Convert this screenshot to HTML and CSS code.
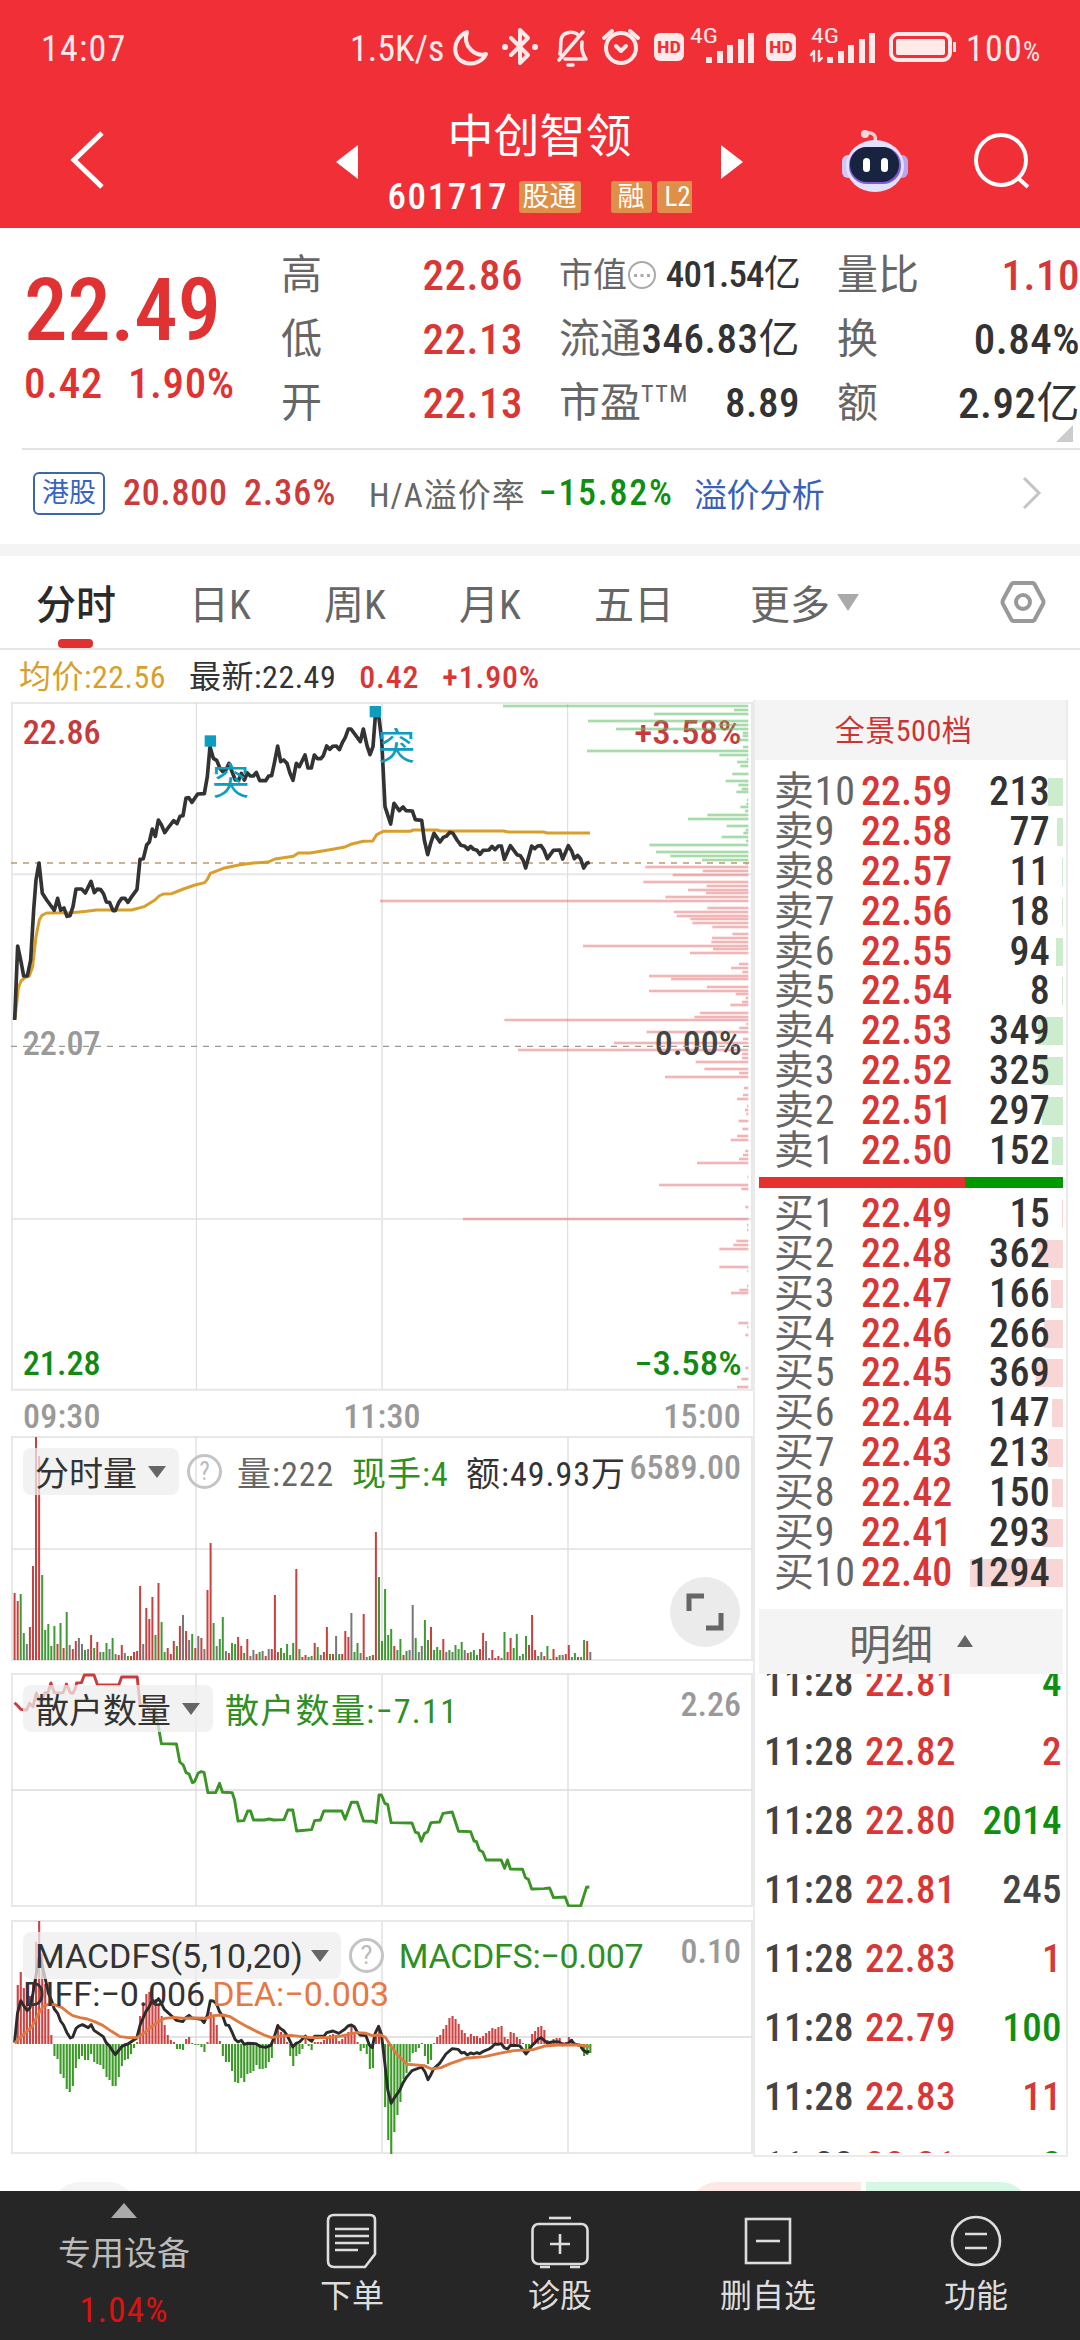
FILE: index.html
```
<!DOCTYPE html>
<html lang="zh">
  <head>
    <meta charset="UTF-8" />
    <meta name="viewport" content="width=device-width, initial-scale=1.0" />
    <title>中创智领 601717</title>
    <link rel="stylesheet" href="styles.css">
  </head>
  <body>
    <header class="top">
      <div class="status">
        <span class="clock">14:07</span>
        <span class="speed">1.5K/s</span>
        <svg class="status-icons" viewBox="450 20 510 60" width="510" height="60" fill="none" stroke="#ffe9e9" stroke-width="4" stroke-linecap="round" stroke-linejoin="round">
          <path d="M467 33C452 39 451 60 466 64C474 66 483 62 486 55C476 58 462 48 467 33Z"/>
          <path d="M511 39L528 56L520 64V31L528 39L511 56"/>
          <path d="M505 48h.1M535 48h.1" stroke-width="6"/>
          <path d="M559 61L583 33M560 55C562 47 558 36 567 34C572 32 577 34 579 37M582 43C581 51 583 56 586 60H565M568 66h5" stroke-width="3.6"/>
          <circle cx="621" cy="49" r="15"/><path d="M604 39L612 32M638 39L630 32M616 47L621 52L626 47"/>
          <g stroke="none" fill="#ffe9e9">
            <rect x="654" y="34" width="30" height="28" rx="6"/>
            <rect x="766" y="34" width="30" height="28" rx="6"/>
            <path d="M706 58h6v6h-6zM717 52h6v12h-6zM727 46h6v18h-6zM738 40h6v24h-6zM748 34h6v30h-6zM827 58h6v6h-6zM838 52h6v12h-6zM848 46h6v18h-6zM859 40h6v24h-6zM869 34h6v30h-6zM953 43h3v10h-3z"/>
            <rect x="896" y="40" width="49" height="16" rx="2"/>
            <text class="ic-g" x="690" y="44" textLength="28" lengthAdjust="spacingAndGlyphs">4G</text>
            <text class="ic-g" x="811" y="44" textLength="28" lengthAdjust="spacingAndGlyphs">4G</text>
          </g>
          <g stroke="none" fill="#ee3038">
            <text class="ic-hd" x="657" y="54" textLength="24" lengthAdjust="spacingAndGlyphs">HD</text>
            <text class="ic-hd" x="769" y="54" textLength="24" lengthAdjust="spacingAndGlyphs">HD</text>
          </g>
          <path d="M814 62V52L811 56M819 52V62L822 59" stroke-width="2.4"/>
          <rect x="891" y="35" width="59" height="26" rx="7"/>
        </svg>
        <span class="battery">100<small>%</small></span>
      </div>
      <div class="title-bar">
        <svg class="back" viewBox="0 0 36 60" width="36" height="60"><path d="M32 3L4 30L32 57" fill="none" stroke="#fff" stroke-width="5"/></svg>
        <svg class="prev" viewBox="0 0 22 34" width="22" height="34"><path d="M22 0V34L0 17Z" fill="#fff"/></svg>
        <div class="stock">
          <h1>中创智领</h1>
          <div class="code"><span>601717</span><b>股通</b><b class="rong">融</b><b class="l2">L2</b></div>
        </div>
        <svg class="next" viewBox="0 0 22 34" width="22" height="34"><path d="M0 0V34L22 17Z" fill="#fff"/></svg>
        <svg class="robot" viewBox="0 0 68 64" width="68" height="64">
          <path d="M34 13C36 5 30 3 25 4" fill="none" stroke="#ffc9cf" stroke-width="3.5"/>
          <circle cx="24" cy="5" r="4" fill="#ffd5d8"/>
          <rect x="1" y="26" width="12" height="23" rx="6" fill="#cfc8f8"/>
          <rect x="55" y="26" width="12" height="23" rx="6" fill="#b9a6ee"/>
          <ellipse cx="34" cy="37" rx="29" ry="26" fill="#e4e1fd"/>
          <rect x="8" y="18" width="52" height="37" rx="18" fill="#7d5be0"/>
          <rect x="9" y="18" width="49" height="35" rx="17" fill="#17233f"/>
          <rect x="22" y="29" width="7" height="14" rx="3.5" fill="#fff"/>
          <rect x="40" y="29" width="7" height="14" rx="3.5" fill="#fff"/>
        </svg>
        <svg class="search" viewBox="0 0 60 60" width="60" height="60" fill="none" stroke="#fff" stroke-width="4"><circle cx="29" cy="29" r="25"/><path d="M46 47L56 56"/></svg>
      </div>
    </header>

    <section class="quote">
      <div class="last">
        <div class="price">22.49</div>
        <div class="change"><span>0.42</span><span>1.90%</span></div>
      </div>
      <dl class="col1">
        <dt>高</dt><dd class="red">22.86</dd>
        <dt>低</dt><dd class="red">22.13</dd>
        <dt>开</dt><dd class="red">22.13</dd>
      </dl>
      <dl class="col2">
        <dt class="cap">市值<svg viewBox="0 0 30 30" width="30" height="30"><circle cx="15" cy="15" r="13" fill="none" stroke="#aaa" stroke-width="2"/><path d="M7 14h3v3H7zM13.500 14h3v3h-3zM20 14h3v3h-3z" fill="#aaa"/></svg></dt><dd class="small">401.54<u>亿</u></dd>
        <dt>流通</dt><dd>346.83<u>亿</u></dd>
        <dt>市盈<sup>TTM</sup></dt><dd>8.89</dd>
      </dl>
      <dl class="col3">
        <dt>量比</dt><dd class="red">1.10</dd>
        <dt>换</dt><dd>0.84%</dd>
        <dt>额</dt><dd>2.92<u>亿</u></dd>
      </dl>
      <i class="corner"></i>
    </section>

    <section class="hk">
      <b class="tag">港股</b>
      <span class="hk-price">20.800</span>
      <span class="hk-pct">2.36%</span>
      <span class="hk-label">H/A溢价率</span>
      <span class="hk-prem">−15.82%</span>
      <a class="hk-link">溢价分析</a>
      <svg viewBox="0 0 22 34" width="22" height="34"><path d="M3 2L18 17L3 32" fill="none" stroke="#c4c4c4" stroke-width="3"/></svg>
    </section>

    <nav class="tabs">
      <a class="on">分时</a><a>日K</a><a>周K</a><a>月K</a><a>五日</a><a>更多<i></i></a>
      <svg viewBox="0 0 46 44" width="46" height="44" fill="none" stroke="#999" stroke-width="4"><path d="M13 3H33Q34 3 35 5L43 20Q44 22 43 24L35 39Q34 41 33 41H13Q12 41 11 39L3 24Q2 22 3 20L11 5Q12 3 13 3Z"/><circle cx="23" cy="22" r="7"/></svg>
    </nav>

    <main class="main">
      <div class="charts">
        <div class="legend"><span class="avg">均价:22.56</span><span>最新:22.49</span><span class="red">0.42</span><span class="red">+1.90%</span></div>

        <!-- price panel, drawn at three units per pixel -->
        <svg class="price-chart" viewBox="0 30 2259 2085" width="753" height="695">
          <g fill="none" stroke="#e8e8e8" stroke-width="6">
            <path d="M36 39H2256V2099H36ZM1146 39V2099M36 553H2256M36 1587H2256"/>
            <path d="M589 39V2099M1703 39V2099" stroke="#d9d9d9" stroke-width="3"/>
          </g>
          <g class="chart-text">
            <text x="68" y="162" textLength="234" lengthAdjust="spacingAndGlyphs" class="t-red">22.86</text>
            <text x="1903" y="162" textLength="322" lengthAdjust="spacingAndGlyphs" class="t-red">+3.58%</text>
            <text x="68" y="1096" textLength="234" lengthAdjust="spacingAndGlyphs" class="t-gray">22.07</text>
            <text x="68" y="2055" textLength="234" lengthAdjust="spacingAndGlyphs" class="t-green">21.28</text>
            <text x="1903" y="2055" textLength="322" lengthAdjust="spacingAndGlyphs" class="t-green">−3.58%</text>
          </g>
          <g id="depth"></g>
          <text class="chart-text t-dark" x="1964" y="1096" textLength="261" lengthAdjust="spacingAndGlyphs">0.00%</text>
          <g fill="none" stroke-width="4" stroke-dasharray="18 18">
            <path d="M33 519H2247" stroke="#b99b6b"/><path d="M33 1069H2247" stroke="#999"/>
          </g>
          <g fill="none" stroke-linejoin="round">
            <polyline stroke="#d99f2b" stroke-width="9" points="45,985 55,895 63,873 75,863 88,858 98,830 108,740 118,690 126,676 140,669 215,668 260,664 290,660 395,660 432,650 465,630 477,618 490,612 515,611 550,597 585,585 614,578 622,568 631,550 670,535 720,524 760,519 805,516 825,507 880,499 895,489 930,489 985,480 1035,471 1052,463 1090,454 1118,453 1130,434 1150,424 1230,424 1240,420 1310,420 1322,423 1510,423 1525,426 1630,426 1642,429 1770,429"/>
            <polyline stroke="#333" stroke-width="11" points="44,990 53,768 63,815 71,858 82,858 92,810 101,660 108,570 117,519 127,610 140,630 163,661 173,625 182,661 192,654 201,679 210,677 219,650 228,597 245,597 256,609 273,574 283,608 292,597 302,599 311,612 319,636 329,638 339,662 346,662 356,638 365,625 375,625 384,637 393,623 411,598 420,508 430,506 440,465 448,456 457,417 466,439 475,390 484,404 494,428 504,414 521,392 531,401 540,379 549,377 558,324 566,323 576,337 593,312 613,311 622,260 630,170 640,205 650,211 660,235 668,245 678,239 687,220 696,245 706,270 716,270 724,250 733,270 742,249 751,258 760,258 769,247 779,272 797,272 806,258 815,257 824,215 833,168 842,215 851,210 861,220 870,250 879,271 889,220 898,230 915,195 924,234 934,234 943,195 952,206 962,206 970,197 980,168 989,178 998,169 1009,168 1018,179 1027,158 1036,142 1045,117 1053,117 1081,155 1090,117 1101,167 1110,194 1119,170 1127,66 1137,85 1145,150 1155,350 1172,402 1182,340 1198,362 1209,351 1218,362 1237,363 1246,389 1265,391 1273,450 1283,494 1292,460 1302,430 1320,456 1330,442 1340,438 1349,427 1359,430 1371,450 1383,466 1395,469 1404,478 1412,469 1421,478 1431,481 1440,493 1449,481 1467,480 1476,469 1485,479 1495,468 1504,468 1513,508 1531,467 1551,494 1561,497 1569,510 1577,534 1595,468 1604,476 1613,468 1623,467 1632,480 1642,506 1660,481 1679,480 1688,507 1705,467 1715,483 1723,506 1733,496 1742,507 1751,534 1760,520 1769,517"/>
          </g>
          <g fill="#0c9dbf">
            <rect x="614" y="136" width="34" height="34"/><rect x="1109" y="48" width="34" height="34"/>
            <text class="mark" x="636" y="315">突</text><text class="mark" x="1133" y="210">突</text>
          </g>
        </svg>
        <div class="times"><span>09:30</span><span>11:30</span><span>15:00</span></div>

        <div class="panel">
          <svg viewBox="0 0 753 226" width="753" height="226">
            <g class="grid"><path d="M12 1H752V224H12ZM382 1V224M12 113H752"/><path class="thin" d="M196 1V224M568 1V224"/></g>
            <g id="volume"></g>
          </svg>
          <div class="bar-row">
            <span class="chip">分时量<i></i></span><span class="help">?</span>
            <span class="v1">量:222</span><span class="v2">现手:4</span><span class="v3">额:49.93万</span><span class="max">6589.00</span>
          </div>
          <div class="expand"><svg viewBox="0 0 38 38" width="38" height="38" fill="none" stroke="#666" stroke-width="5"><path d="M3 18V3H18M35 20V35H20"/></svg></div>
        </div>

        <div class="panel retail">
          <svg viewBox="0 0 753 234" width="753" height="234">
            <g class="grid"><path d="M12 1H752V233H12ZM382 1V233"/><path class="thin" d="M196 1V233M568 1V233M12 117H752"/></g>
            <g transform="translate(0 -13) scale(.4847 .3333)" class="line">
              <polyline stroke="#c83c3c" points="30,128 37,138 43,148 55,150 61,130 68,140 75,99 84,128 93,98 99,98 105,69 112,98 124,99 130,98 137,72 145,98 150,100 155,88 158,69 168,68 174,45 194,45 201,74 245,75 251,51 283,51 289,135 304,138 311,160"/>
              <polyline stroke="#3a9426" points="311,160 320,145 325,185 333,251 364,252 371,306 378,315 384,338 390,342 397,368 401,366 409,339 415,335 421,337 429,398 445,398 453,370 459,397 479,398 484,420 491,483 503,482 511,453 517,453 523,480 545,480 555,477 565,480 586,479 594,450 604,450 612,513 643,509 649,482 661,480 668,453 705,453 712,478 725,427 737,427 750,483 770,484 776,488 782,405 787,405 794,430 800,434 807,488 850,489 857,517 863,519 869,544 876,520 882,516 889,488 907,486 914,460 933,456 946,514 971,515 978,543 983,545 989,570 996,576 1003,600 1034,600 1041,625 1047,600 1053,627 1078,628 1084,653 1090,658 1097,687 1122,686 1134,684 1142,713 1166,711 1173,738 1198,738 1210,682 1216,681"/>
            </g>
          </svg>
          <div class="bar-row">
            <span class="chip">散户数量<i></i></span><span class="v-retail">散户数量:−7.11</span><span class="max">2.26</span>
          </div>
        </div>

        <div class="panel macd">
          <svg viewBox="0 0 753 234" width="753" height="234">
            <g class="grid"><path d="M12 1H752V233H12ZM382 1V233"/><path class="thin" d="M196 1V233M568 1V233M12 117H752"/></g>
            <g id="macd"></g>
            <g transform="translate(0 -10) scale(.4847 .3333)" class="line">
              <polyline stroke="#2b2b2b" points="30,398 36,310 43,272 50,290 56,302 62,293 68,250 75,190 81,140 87,165 94,210 100,250 106,270 112,297 119,310 125,333 131,345 138,368 145,384 150,381 157,355 163,348 170,344 182,353 188,344 194,361 207,374 213,380 219,398 226,408 232,422 238,434 244,423 251,410 257,405 264,402 276,390 282,385 289,345 295,325 301,305 308,290 314,270 320,278 327,266 333,280 339,298 346,307 352,315 364,331 377,335 384,322 390,316 396,324 415,328 421,338 428,315 434,272 440,273 447,282 453,305 460,320 466,345 472,346 478,364 485,388 491,396 498,391 504,403 510,400 528,401 536,409 548,412 559,406 566,380 573,347 579,356 586,363 592,375 598,393 604,411 611,400 618,396 630,378 637,388 643,394 649,379 668,379 674,368 687,363 699,370 712,357 718,348 725,345 731,350 737,366 743,375 755,377 762,405 768,413 774,370 781,349 787,373 794,460 800,540 807,580 813,565 825,540 831,520 838,503 850,482 870,471 877,486 883,509 889,494 895,476 907,460 920,432 933,416 945,418 952,429 958,427 964,435 971,429 977,432 984,428 989,431 996,425 1009,417 1015,411 1021,402 1028,403 1034,401 1041,414 1047,417 1053,406 1072,407 1078,418 1085,432 1091,422 1097,407 1104,398 1110,388 1116,383 1129,399 1142,395 1154,396 1161,405 1172,400 1179,391 1185,402 1197,406 1203,420 1210,427 1216,424"/>
              <polyline stroke="#e0793f" points="30,400 42,382 55,365 66,350 78,315 88,292 100,283 115,285 128,293 140,307 150,317 165,323 180,327 195,335 212,346 230,364 248,380 265,383 282,383 295,372 310,353 325,337 340,325 360,322 380,325 400,324 425,325 440,317 460,315 475,320 490,334 510,350 530,365 545,375 560,383 575,379 600,376 640,383 680,383 705,378 735,368 755,370 768,377 785,375 795,382 805,405 820,435 840,463 875,467 890,477 910,473 930,460 960,445 1000,440 1030,430 1060,422 1100,419 1125,408 1150,405 1195,405 1216,410"/>
            </g>
          </svg>
          <div class="bar-row wide">
            <span class="chip">MACDFS(5,10,20)<i></i></span><span class="help">?</span><span class="v-macd">MACDFS:−0.007</span><span class="max">0.10</span>
          </div>
          <div class="sub-row wide"><span>DIFF:−0.006</span><span class="dea">DEA:−0.003</span></div>
        </div>
      </div>

      <aside class="book">
        <div class="book-head">全景500档</div>
        <div class="levels" id="asks"></div>
        <div class="ratio"><i></i></div>
        <div class="levels" id="bids"></div>
        <div class="detail-head">明细<i></i></div>
        <div class="ticks" id="ticks"></div>
      </aside>
    </main>

    <div class="peek"><i class="p1"></i><i class="p2"></i><i class="p3"></i></div>

    <footer class="bottom">
      <div class="device"><i></i><span>专用设备</span><em>1.04%</em></div>
      <div><svg viewBox="0 0 60 56" width="60" height="56"><path d="M12 2H48Q53 2 53 7V41L43 54H12Q6 54 6 48V8Q6 2 12 2Z"/><path d="M13 16H47M13 23H47M13 30H47M13 37H36"/></svg><span>下单</span></div>
      <div><svg viewBox="0 0 60 56" width="60" height="56"><path d="M19 5H41" /><rect x="2.500" y="11" width="55" height="40" rx="6"/><path d="M30 21V41M20 31H40M10 54H20M40 54H50"/></svg><span>诊股</span></div>
      <div><svg viewBox="0 0 60 56" width="60" height="56"><rect x="8" y="6" width="44" height="44"/><path d="M18 28H42"/></svg><span>删自选</span></div>
      <div><svg viewBox="0 0 60 56" width="60" height="56"><circle cx="30" cy="28" r="24"/><path d="M19 21H41M19 35H41"/></svg><span>功能</span></div>
    </footer>

    <script>
      const RED = "#c9403f", GREEN = "#3f9a35", GRAY = "#777";

      function rect(x, y, w, h, fill) {
        return `<rect x="${x.toFixed(1)}" y="${y}" width="${w}" height="${h}" fill="${fill}"/>`;
      }

      // y:length pairs, measured from the right edge
      const depthSell = "48:736 60:43 72:283 93:481 105:90 117:397 129:17 138:17 150:30 171:16 183:484 195:87 207:5 216:34 228:24 252:48 273:68 285:30 297:20 306:36 330:4 342:6 351:24 363:10 375:123 387:181 408:65 420:8 429:15 441:80 453:7 465:297 486:277 498:234 510:139";
      const depthBuy = "520:10 531:309 543:137 555:227 576:315 588:125 600:181 609:127 621:249 633:1105 654:123 666:223 678:215 687:174 699:168 711:108 732:48 744:109 756:111 768:496 777:106 789:175 822:28 834:52 846:18 858:298 867:232 891:124 903:298 912:38 924:8 936:19 945:54 969:145 981:162 990:732 1002:6 1014:27 1026:305 1047:16 1059:403 1080:691 1092:20 1104:19 1116:158 1137:132 1149:28 1161:250 1194:13 1215:16 1227:34 1248:4 1260:10 1272:6 1293:29 1317:18 1338:34 1350:53 1383:9 1395:16 1407:28 1419:154 1461:3 1485:268 1497:21 1551:9 1587:856 1605:4 1620:4 1653:36 1665:45 1677:87 1731:87 1743:3 1788:4 1800:27 1809:52 1899:30 1911:4 1935:9 2034:9 2067:21 2091:34";
      function depthBars(list, fill) {
        return list.split(" ").map((s) => {
          const [y, w] = s.split(":").map(Number);
          return rect(2245 - w, y - 4, w, 8, fill);
        }).join("");
      }
      document.getElementById("depth").innerHTML =
        depthBars(depthSell, "rgba(96,190,100,.55)") + depthBars(depthBuy, "rgba(226,100,100,.48)");

      // one bar a minute
      const volume = "67r 59r 66g 27g 16k 33r 94r 223r 204r 85g 30g 36g 14g 34g 16r 37g 12r 48g 15k 11r 19r 22k 16k 10g 11k 25r 12g 18r 8k 8g 17g 11k 22g 6k 5r 15r 7k 4g 4r 8r 9r 74r 16k 52r 41r 63r 25g 77r 38g 8g 12r 6r 19r 14g 34r 45k 29r 20k 26g 12r 24k 22r 11k 70r 117r 37g 14k 21g 43g 9k 7r 17g 16g 23r 14r 7g 21r 4k 10k 6r 8g 9k 4r 11k 11r 65r 8r 12g 7g 16g 5g 17g 91r 11g 3r 5r 3g 4g 17r 13g 5k 8r 33r 6g 6r 24k 6g 6r 29r 23r 47k 8g 17g 7k 46r 3k 4g 5r 128r 83g 19g 71g 25g 31g 14r 10g 21g 5r 9g 10k 55k 22g 8k 14k 40g 20g 33r 10g 13g 10g 21r 8k 10g 8k 15g 11g 18g 10k 7r 8g 10g 5g 11r 27r 19k 2k 10r 2r 4r 2k 28g 8r 22r 12g 26g 4k 6g 24g 15r 45r 10r 4g 8k 4r 14g 1r 11r 3r 5g 5k 6r 15r 3g 7g 3r 3g 20g 19r 8k";
      const tone = { r: RED, g: GREEN, k: GRAY };
      document.getElementById("volume").innerHTML = volume.split(" ").map((s, i) => {
        const h = parseInt(s);
        return rect(13.6 + i * 3.062, 224 - h, 2, h, tone[s.slice(-1)]);
      }).join("");

      const macd = [0,59,72,56,40,48,60,102,123,90,60,35,9,-12,-15,-30,-34,-45,-48,-42,-24,-15,-12,-16,-16,-10,-18,-20,-21,-25,-33,-36,-42,-42,-33,-22,-16,-15,-10,-4,2,28,38,50,52,57,45,40,28,19,9,4,2,-5,-5,-6,5,7,1,-1,-1,-3,-8,2,32,28,19,3,-12,-18,-18,-27,-38,-39,-34,-38,-30,-29,-27,-21,-25,-25,-24,-18,-14,10,20,12,10,2,-12,-22,-12,-10,-5,8,-2,-6,2,2,2,4,6,9,10,9,3,5,9,12,19,11,2,-7,-4,-10,-25,-24,8,18,10,-63,-96,-110,-88,-71,-58,-35,-29,-18,-9,-8,-4,1,-12,-20,-16,1,7,9,15,19,26,28,25,20,14,11,7,10,8,8,6,8,11,13,16,15,17,18,7,5,12,11,7,5,1,-8,-5,10,13,17,18,14,4,2,5,6,6,2,2,7,5,1,-2,-5,-12,-11,-9];
      document.getElementById("macd").innerHTML = macd.map((v, i) =>
        rect(13.6 + i * 3.062, v > 0 ? 124 - v : 124, 2.1, Math.abs(v), v > 0 ? "#d04242" : "#3a9a25")
      ).join("");

      function levels(id, side, from, step, price, vols) {
        const fill = side === "卖" ? "sell" : "buy";
        document.getElementById(id).innerHTML = vols.map((v, i) =>
          `<div class="level"><span class="lv">${side}${from + step * i}</span><span class="pr">${(price - i * 0.01).toFixed(2)}</span><span class="vol">${v}</span><i class="${fill}" style="width:${Math.round(v / 13.9)}px"></i></div>`
        ).join("");
      }
      levels("asks", "卖", 10, -1, 22.59, [213, 77, 11, 18, 94, 8, 349, 325, 297, 152]);
      levels("bids", "买", 1, 1, 22.49, [15, 362, 166, 266, 369, 147, 213, 150, 293, 1294]);

      const ticks = [["22.81", 4, "g"], ["22.82", 2, "r"], ["22.80", 2014, "g"], ["22.81", 245, "k"], ["22.83", 1, "r"], ["22.79", 100, "g"], ["22.83", 11, "r"], ["22.81", 8, "g"]];
      document.getElementById("ticks").innerHTML = ticks.map(([p, v, c]) =>
        `<div class="tick"><span>11:28</span><span class="red">${p}</span><span class="${c}">${v}</span></div>`
      ).join("");
    </script>
  </body>
</html>
```
FILE: styles.css
```
* {
  box-sizing: border-box;
}
body {
  margin: 0;
  width: 1080px;
  height: 2340px;
  overflow: hidden;
  background: #fff;
  color: #333;
  font-family: Roboto, "Noto Sans CJK SC", sans-serif;
  font-stretch: 75%;
}
i, em {
  font-style: normal;
}
svg {
  display: block;
  flex: none;
}
.red, .r {
  color: #d93636;
}
.g {
  color: #0f8f12;
}
.k {
  color: #444;
}
.wide {
  font-stretch: 100%;
}

/* header */
.top {
  height: 228px;
  background: #f02f37;
  color: #fff;
}
.status {
  display: flex;
  align-items: center;
  height: 98px;
  padding-left: 41px;
  font-size: 36px;
  color: #ffe9e9;
}
.clock {
  width: 309px;
  letter-spacing: 1.2px;
}
.speed {
  width: 100px;
}
.battery {
  margin-left: 6px;
  letter-spacing: 1.2px;
}
.battery small {
  font-size: 27px;
}
.ic-g {
  font-size: 20px;
}
.ic-hd {
  font-size: 17px;
  font-weight: 700;
}
.title-bar {
  display: flex;
  height: 130px;
  padding-left: 70px;
}
.back {
  margin-top: 32px;
}
.prev, .next {
  margin-top: 47px;
}
.prev {
  margin-left: 230px;
}
.stock {
  width: 363px;
  display: flex;
  flex-direction: column;
  align-items: center;
}
.stock h1 {
  margin: 8px 0 0;
  font-size: 46px;
  font-weight: 400;
  line-height: 60px;
}
.code {
  display: flex;
  align-items: center;
  width: 304px;
  height: 60px;
  padding-top: 1px;
  overflow: hidden;
}
.code span {
  flex: none;
  width: 131px;
  font-size: 37px;
  font-weight: 500;
  letter-spacing: 1.6px;
}
.code b {
  flex: none;
  height: 32px;
  padding: 0 4px;
  border-radius: 3px;
  background: #df9048;
  font-size: 27px;
  font-weight: 400;
  line-height: 32px;
}
.code .rong {
  margin: 0 5px 0 30px;
  padding: 0 7px;
}
.code .l2 {
  padding: 0 8px;
}
.robot {
  margin: 31px 0 0 98px;
}
.search {
  margin: 33px 0 0 63px;
}

/* quote block */
.quote {
  position: relative;
  display: flex;
  height: 222px;
  margin-left: 22px;
  padding-top: 15px;
  border-bottom: 2px solid #e3e3e3;
}
.last {
  width: 259px;
  color: #e03232;
}
.price {
  height: 128px;
  padding: 17px 0 0 2px;
  font-size: 87px;
  font-weight: 500;
  line-height: 100px;
  letter-spacing: -0.3px;
}
.change {
  display: flex;
  gap: 25px;
  padding-left: 2px;
  font-size: 43px;
  font-weight: 500;
  line-height: 24px;
  letter-spacing: 0.6px;
}
.quote dl {
  display: grid;
  grid-template-columns: auto 1fr;
  grid-auto-rows: 64px;
  align-items: center;
  margin: 0;
  font-size: 43px;
}
.quote dt {
  color: #666;
  font-size: 41px;
  line-height: 60px;
  white-space: nowrap;
}
.quote dd {
  margin: 0;
  line-height: 60px;
  text-align: right;
  white-space: nowrap;
  font-weight: 500;
  letter-spacing: 0.5px;
}
.quote u {
  font-weight: 400;
  text-decoration: none;
}
.quote .col1 {
  width: 242px;
}
.quote .col2 {
  width: 241px;
  margin-left: 36px;
  grid-template-columns: 80px 1fr;
}
.quote .col2 dd {
  font-size: 41px;
}
.quote .col2 .small {
  font-size: 37px;
  letter-spacing: -0.8px;
}
.quote .cap {
  display: flex;
  align-items: center;
  font-size: 34px;
}
.quote sup {
  font-size: 24px;
  line-height: 0;
  letter-spacing: 1.5px;
}
.quote .col3 {
  width: 243px;
  margin-left: 37px;
}
.corner {
  position: absolute;
  right: 7px;
  bottom: 6px;
  border-left: 17px solid transparent;
  border-bottom: 17px solid #ccc;
}

/* h-share line */
.hk {
  display: flex;
  align-items: center;
  height: 106px;
  padding: 0 37px 8px 33px;
  border-bottom: 12px solid #f4f4f4;
  white-space: nowrap;
  font-size: 36px;
  letter-spacing: 1.1px;
}
.hk .tag {
  width: 72px;
  height: 43px;
  margin-right: 18px;
  border: 2px solid #3d68a8;
  border-radius: 6px;
  color: #3763c0;
  font-size: 27px;
  font-weight: 400;
  line-height: 38px;
  text-align: center;
  letter-spacing: 0;
}
.hk-price, .hk-pct, .hk-prem {
  font-weight: 500;
}
.hk-price {
  width: 121px;
  letter-spacing: 0.8px;
  color: #cc3a3a;
}
.hk-pct {
  width: 125px;
  color: #cc3a3a;
}
.hk-label {
  width: 170px;
  font-size: 33px;
  letter-spacing: 1px;
  color: #666;
}
.hk-prem {
  width: 155px;
  letter-spacing: 1.7px;
  color: #0f8f12;
}
.hk-link {
  flex: 1;
  font-size: 33px;
  color: #3b5fb8;
  letter-spacing: -0.4px;
}

/* period tabs */
.tabs {
  display: flex;
  align-items: center;
  height: 94px;
  padding-left: 36px;
  border-bottom: 2px solid #e6e6e6;
  color: #666;
  font-size: 40px;
}
.tabs a {
  position: relative;
  flex: none;
  width: 135px;
}
.tabs a:first-child {
  width: 153px;
}
.tabs a:nth-child(5) {
  width: 156px;
}
.tabs a:nth-child(6) {
  display: flex;
  align-items: center;
  gap: 7px;
  width: 250px;
}
.tabs a i {
  border: 11px solid transparent;
  border-top: 17px solid #aaa;
  border-bottom: 0;
}
.tabs .on {
  color: #2a2a2a;
  font-weight: 500;
}
.tabs .on::after {
  content: "";
  position: absolute;
  left: 22px;
  bottom: -17px;
  width: 35px;
  height: 9px;
  border-radius: 4px;
  background: #e03030;
}

.main {
  display: flex;
  height: 1508px;
}
.charts {
  width: 753px;
}
.legend {
  display: flex;
  height: 50px;
  padding-left: 19px;
  font-size: 32px;
  line-height: 54px;
  letter-spacing: 0.5px;
}
.legend span {
  margin-right: 23px;
}
.legend .avg {
  color: #d99f2b;
}
.legend .red {
  font-weight: 500;
  letter-spacing: 0.8px;
}
.chart-text {
  font-size: 98px;
  font-weight: 500;
}
.t-red {
  fill: #c83a3a;
}
.t-gray {
  fill: #999;
}
.t-green {
  fill: #128a12;
}
.t-dark {
  fill: #444;
}
.mark {
  font-size: 112px;
}
.times {
  display: flex;
  justify-content: space-between;
  height: 41px;
  padding: 0 12px 0 23px;
  font-size: 34px;
  font-weight: 500;
  line-height: 42px;
  letter-spacing: 0.2px;
  color: #999;
}
.panel {
  position: relative;
  height: 226px;
}
.retail, .macd {
  height: 234px;
  margin-top: 11px;
}
.macd {
  margin-top: 13px;
}
.grid path {
  fill: none;
  stroke: #e8e8e8;
  stroke-width: 2;
}
.grid .thin {
  stroke: #dcdcdc;
  stroke-width: 1.3;
}
.line polyline {
  fill: none;
  stroke-width: 2.9;
  stroke-linejoin: round;
  vector-effect: non-scaling-stroke;
}
.bar-row {
  position: absolute;
  left: 23px;
  right: 12px;
  top: 12px;
  height: 47px;
  display: flex;
  align-items: center;
  white-space: nowrap;
  font-size: 34px;
}
.bar-row span {
  flex: none;
}
.chip {
  display: flex;
  align-items: center;
  gap: 11px;
  height: 47px;
  padding: 0 13px 0 12px;
  border-radius: 8px;
  background: rgba(238, 238, 238, 0.75);
}
.wide .chip {
  gap: 8px;
  padding-right: 12px;
}
.chip i {
  border: 9px solid transparent;
  border-top: 12px solid #666;
  border-bottom: 0;
}
.help {
  width: 35px;
  height: 35px;
  margin: 0 15px 0 8px;
  border: 3px solid #c4c4c4;
  border-radius: 50%;
  color: #bbb;
  font-size: 25px;
  line-height: 30px;
  text-align: center;
}
.v1, .v2, .v3 {
  letter-spacing: 1px;
}
.v1 {
  width: 115px;
  color: #666;
}
.v2 {
  width: 114px;
  color: #2f8f22;
}
.v-retail, .v-macd {
  color: #2f8f22;
}
.v-retail {
  margin-left: 12px;
  letter-spacing: 1.3px;
}
.v-macd {
  letter-spacing: -0.3px;
}
.max {
  margin-left: auto;
  padding-bottom: 10px;
  color: #999;
  font-stretch: 75%;
  font-weight: 500;
}
.expand {
  position: absolute;
  left: 670px;
  top: 141px;
  width: 70px;
  height: 70px;
  padding: 16px;
  border-radius: 50%;
  background: #ebebeb;
}
.sub-row {
  position: absolute;
  left: 23px;
  top: 53px;
  display: flex;
  gap: 7px;
  font-size: 34px;
  line-height: 42px;
}
.dea {
  color: #e57843;
}

/* order book */
.book {
  width: 315px;
  height: 1457px;
  margin-top: 50px;
  border: 2px solid #ebebeb;
  border-top: 0;
}
.book-head {
  height: 60px;
  padding-right: 14px;
  margin-bottom: 12px;
  background: #f4f4f4;
  color: #cc3333;
  font-size: 30px;
  line-height: 62px;
  letter-spacing: 0.5px;
  text-align: center;
}
.level {
  position: relative;
  display: flex;
  align-items: center;
  height: 39.9px;
  padding-left: 19px;
  font-size: 40px;
  font-weight: 500;
  line-height: 40px;
}
.level span {
  position: relative;
  z-index: 1;
}
.level .lv {
  width: 87px;
  font-weight: 400;
  letter-spacing: 0.8px;
  color: #666;
}
.level .pr {
  width: 92px;
  color: #d93636;
}
.level .vol {
  width: 97px;
  text-align: right;
  letter-spacing: 0.3px;
}
.level i {
  position: absolute;
  right: 3px;
  top: 6px;
  height: 28px;
}
.sell {
  background: #cdebcd;
}
.buy {
  background: #f8d6d6;
}
.ratio {
  height: 11px;
  margin: 6px 3px 6px 4px;
  background: #009900;
}
.ratio i {
  display: block;
  width: 206px;
  height: 11px;
  background: #e63030;
}
.detail-head {
  display: flex;
  align-items: center;
  justify-content: center;
  gap: 24px;
  height: 65px;
  margin: 16px 3px 0 4px;
  background: #f4f4f4;
  color: #666;
  font-size: 42px;
}
.detail-head i {
  border: 8px solid transparent;
  border-bottom: 12px solid #666;
  border-top: 0;
}
.ticks {
  height: 479px;
  overflow: hidden;
}
.tick {
  position: relative;
  top: -25px;
  display: flex;
  height: 69px;
  padding: 0 4px 0 9px;
  font-size: 39px;
  font-weight: 500;
  line-height: 69px;
  letter-spacing: 0.4px;
  color: #444;
}
.tick span:first-child {
  width: 101px;
}
.tick span:last-child {
  flex: 1;
  text-align: right;
}

/* next card, mostly covered by the toolbar */
.peek {
  display: flex;
  height: 33px;
  padding: 24px 50px 0;
  overflow: hidden;
}
.peek i {
  flex: none;
  height: 60px;
}
.p1 {
  width: 88px;
  border-radius: 30px;
  background: #f4f4f4;
}
.p2 {
  width: 173px;
  margin: 0 5px 0 550px;
  border-radius: 30px 0 0 30px;
  background: #fde8e6;
}
.p3 {
  width: 164px;
  border-radius: 0 30px 30px 0;
  background: #d6f7e4;
}

.bottom {
  display: flex;
  height: 149px;
  background: #262626;
  color: #ddd;
  font-size: 32px;
}
.bottom div {
  display: flex;
  flex-direction: column;
  align-items: center;
  width: 208px;
  padding-top: 22px;
}
.bottom svg {
  fill: none;
  stroke: #ddd;
  stroke-width: 2.6;
}
.bottom span {
  line-height: 54px;
}
.bottom .device {
  width: 248px;
  padding-top: 12px;
  color: #bbb;
  font-size: 33px;
}
.device i {
  border: 13px solid transparent;
  border-bottom: 15px solid #aaa;
  border-top: 0;
  margin-bottom: 9px;
}
.device em {
  color: #e01010;
  font-size: 35px;
  line-height: 60px;
  letter-spacing: 1.2px;
}
```
